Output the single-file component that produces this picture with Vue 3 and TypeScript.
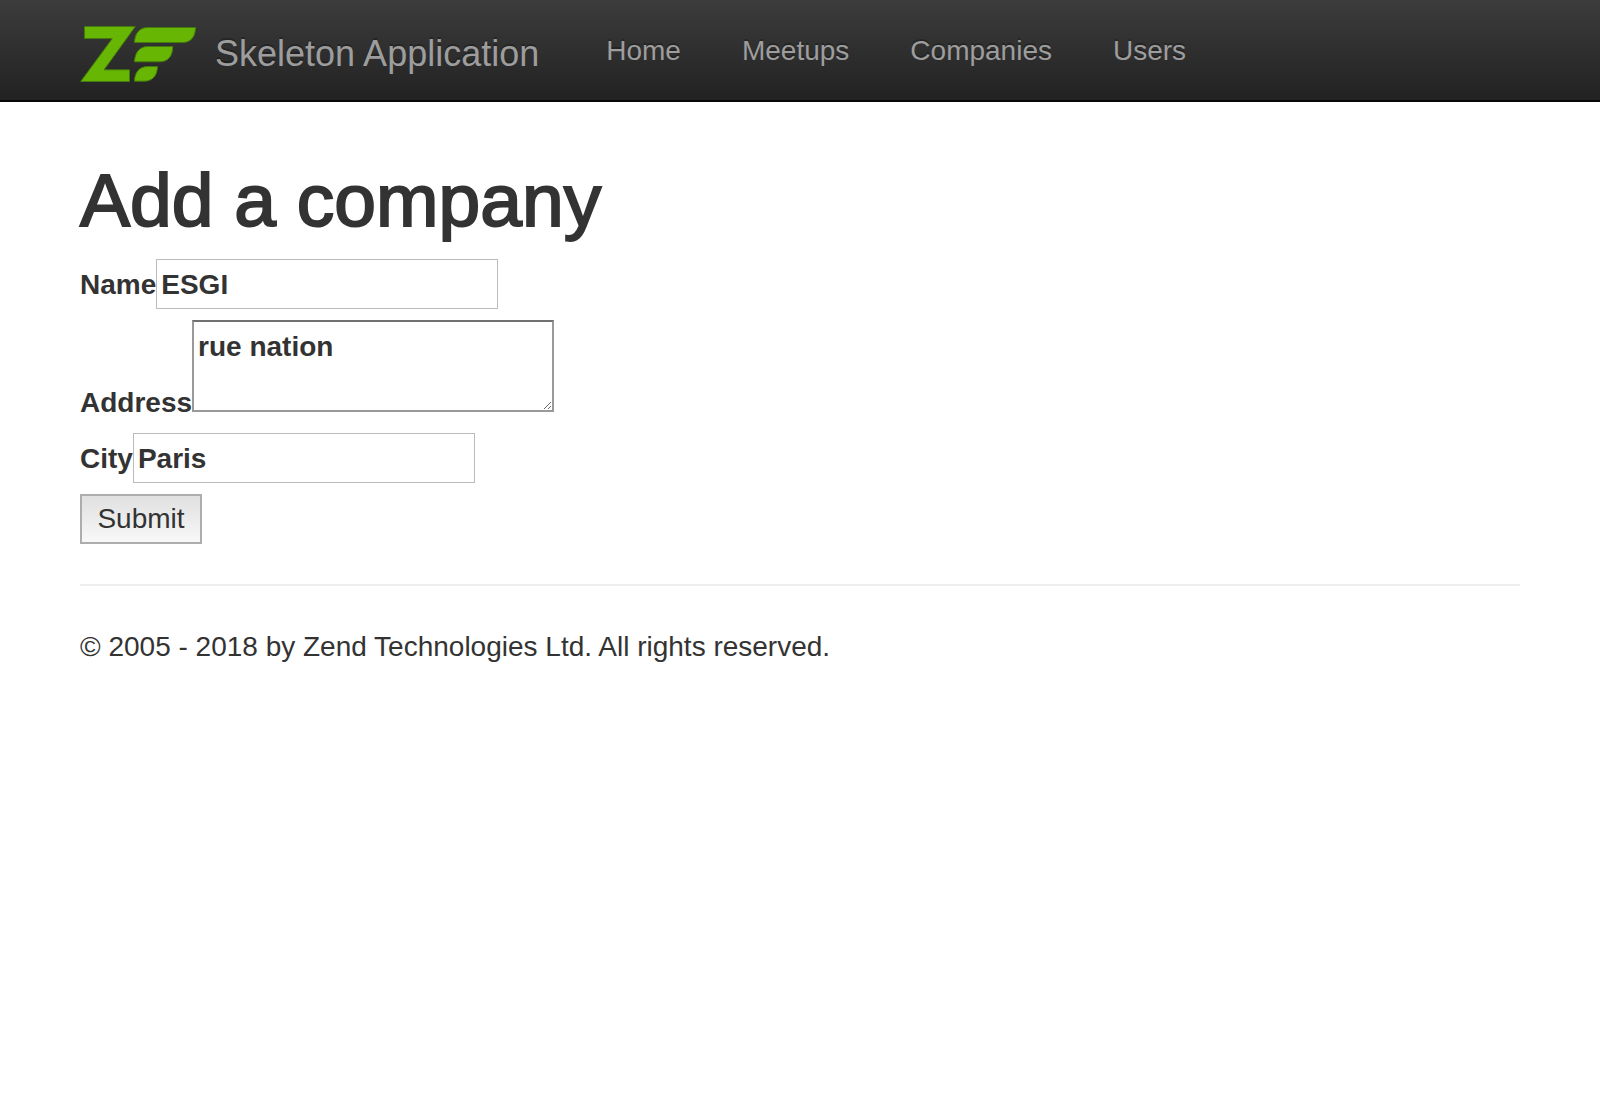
<script setup lang="ts">
import { reactive } from 'vue'

interface NavItem {
  label: string
  href: string
}

const navItems: NavItem[] = [
  { label: 'Home', href: '#home' },
  { label: 'Meetups', href: '#meetups' },
  { label: 'Companies', href: '#companies' },
  { label: 'Users', href: '#users' },
]

const company = reactive({
  name: 'ESGI',
  address: 'rue nation',
  city: 'Paris',
})
</script>

<template>
  <div class="page">
    <header class="navbar">
      <a class="brand" href="#home">
        <svg class="logo" viewBox="60 78 348 168" aria-hidden="true">
          <path d="M73.500 79.500H226L132 209.500H208.500V244.500H62L157 115.500H73.500Z" />
          <path d="M223.500 127.500C224 101 238 82.500 263 82.500H406.500C406 109 394 127.500 368 127.500Z" />
          <path d="M223.500 185.500C224 159 238 139.500 263 139.500H338.500C338 167 325 185.500 299 185.500Z" />
          <path d="M223.500 243.500C224 217 238 199.500 263 199.500H292.500C292 225 279 243.500 253 243.500Z" />
        </svg>
        <span>Skeleton Application</span>
      </a>
      <nav class="nav">
        <a v-for="item in navItems" :key="item.label" :href="item.href">{{ item.label }}</a>
      </nav>
    </header>

    <main class="container">
      <h1>Add a company</h1>
      <form class="form" @submit.prevent>
        <label class="row">
          <span>Name</span>
          <input v-model="company.name" type="text" name="name" />
        </label>
        <label class="row">
          <span>Address</span>
          <textarea v-model="company.address" name="address" rows="2" spellcheck="false"></textarea>
        </label>
        <label class="row">
          <span>City</span>
          <input v-model="company.city" type="text" name="city" />
        </label>
        <button type="submit">Submit</button>
      </form>
      <hr />
      <footer>
        <p>© 2005 - 2018 by Zend Technologies Ltd. All rights reserved.</p>
      </footer>
    </main>
  </div>
</template>

<style>
body {
  margin: 0;
  background: #fff;
}
</style>

<style scoped>
.page {
  color: #333;
  font-family: "Liberation Sans", Arial, sans-serif;
  font-size: 28px;
  line-height: 40px;
}

.navbar {
  display: flex;
  box-sizing: border-box;
  height: 102px;
  padding: 0 80px;
  border-bottom: 2px solid #080808;
  background: linear-gradient(#3c3c3c, #222);
}

.navbar a {
  color: #9d9d9d;
  text-decoration: none;
  text-shadow: 0 -2px 0 rgba(0, 0, 0, 0.25);
}

.brand {
  display: flex;
  align-items: flex-start;
  gap: 19px;
  padding: 26px 37px 0 0;
  font-size: 36px;
  line-height: 56px;
  white-space: nowrap;
}

.logo {
  width: 116px;
  height: 56px;
  fill: #68b604;
  stroke: #447a0b;
  stroke-width: 3;
}

.nav {
  display: flex;
  gap: 1px;
}

.nav a {
  padding: 31px 30px 0;
}

.container {
  padding: 58px 80px 0;
}

h1 {
  margin: 0 0 19px;
  font-size: 75px;
  font-weight: 400;
  line-height: 80px;
  -webkit-text-stroke: 2px #333;
}

.form {
  display: flex;
  flex-direction: column;
  align-items: flex-start;
  gap: 11px;
}

.row {
  display: block;
  font-weight: 700;
  line-height: 38px;
}

input,
textarea {
  box-sizing: border-box;
  margin: 0;
  border-radius: 0;
  outline: 0;
  background: #fff;
  color: inherit;
  font: inherit;
}

input {
  width: 342px;
  height: 50px;
  padding: 2px 4px 0;
  border: 1px solid #bbb;
}

textarea {
  width: 362px;
  height: 92px;
  padding: 5px 4px 3px;
  border: 2px solid #999;
  border-top-color: #707070;
  line-height: 40px;
  vertical-align: baseline;
}

button {
  min-width: 122px;
  height: 50px;
  margin: 0;
  padding: 0 14px;
  border: 2px solid #adadad;
  border-radius: 0;
  background: linear-gradient(#e0e0e0, #f8f8f8);
  color: inherit;
  font: inherit;
}

hr {
  height: 2px;
  margin: 40px 0 41px;
  border: 0;
  background: #eee;
}

p {
  margin: 0;
}
</style>
